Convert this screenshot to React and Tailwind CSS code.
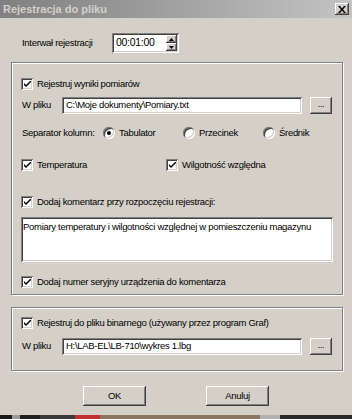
const FONT = { fontFamily: '"Liberation Sans", Arial, sans-serif' };

const RAISED =
  'shadow-[inset_-1px_-1px_#404040,inset_1px_1px_#ffffff,inset_-2px_-2px_#808080,inset_2px_2px_#d4d0c8]';
const SUNKEN =
  'shadow-[inset_1px_1px_#808080,inset_-1px_-1px_#ffffff,inset_2px_2px_#404040,inset_-2px_-2px_#d4d0c8]';

function CheckBox({ label, className = '' }) {
  return (
    <div className={`flex items-center h-[14px] ${className}`}>
      <div className={`w-[12px] h-[12px] bg-white flex items-center justify-center ${SUNKEN}`}>
        <svg width="7" height="7" viewBox="0 0 7 7">
          <path d="M0 2 L0 4 L2 6 L7 1 L7 -1 L2 4 Z" fill="#000" />
        </svg>
      </div>
      <span className="ml-[4px] text-[9.5px] text-black whitespace-nowrap">{label}</span>
    </div>
  );
}

function Radio({ label, checked, className = '' }) {
  return (
    <div className={`flex items-center h-[14px] ${className}`}>
      <div className="w-[12px] h-[12px] rounded-full bg-white flex items-center justify-center shadow-[inset_1px_1px_#808080,inset_-1px_-1px_#ffffff,inset_2px_2px_#404040,inset_-2px_-2px_#d4d0c8]">
        {checked && <div className="w-[4px] h-[4px] rounded-full bg-black" />}
      </div>
      <span className="ml-[4px] text-[9.5px] text-black whitespace-nowrap">{label}</span>
    </div>
  );
}

function FileRow({ value }) {
  return (
    <div className="flex items-center h-[17px]">
      <span className="w-[41px] pl-[1px] text-[9.5px] text-black">W pliku</span>
      <div className={`w-[240px] h-[17px] bg-white flex items-center pl-[4px] text-[9.5px] text-black ${SUNKEN}`}>
        {value}
      </div>
      <div className={`ml-[8px] w-[22px] h-[17px] bg-[#d4d0c8] flex items-center justify-center text-[9px] text-black pb-[2px] ${RAISED}`}>
        ...
      </div>
    </div>
  );
}

function Group({ className = '', children }) {
  return (
    <div
      className={`mx-[11px] w-[332px] border border-[#808080] shadow-[1px_1px_0_#ffffff,inset_1px_1px_0_#ffffff] pl-[9px] pr-[9px] ${className}`}
    >
      {children}
    </div>
  );
}

export default function App() {
  return (
    <div className="w-[352px] h-[419px] bg-[#d4d0c8] flex flex-col overflow-hidden tracking-[-0.3px]" style={FONT}>
      {/* pasek tytułu */}
      <div className="h-[18px] flex items-center justify-between bg-gradient-to-r from-[#808080] to-[#c4c4c4] pl-[3px] pr-[3px]">
        <span className="text-[11px] font-bold text-[#d4d0c8] tracking-[0px]">Rejestracja do pliku</span>
        <div className={`w-[14px] h-[12px] bg-[#d4d0c8] flex items-center justify-center ${RAISED}`}>
          <svg width="8" height="7" viewBox="0 0 8 7">
            <path d="M0 0 L2 0 L4 2.5 L6 0 L8 0 L5 3.5 L8 7 L6 7 L4 4.5 L2 7 L0 7 L3 3.5 Z" fill="#000" />
          </svg>
        </div>
      </div>

      {/* interwał */}
      <div className="flex items-center mt-[15px] h-[20px]">
        <span className="ml-[22px] w-[90px] text-[9.5px] text-black">Interwał rejestracji</span>
        <div className={`w-[67px] h-[20px] bg-white flex items-center pl-[4px] ${SUNKEN}`}>
          <span className="text-[10.5px] text-black flex-1">00:01:00</span>
          <div className="flex flex-col mr-[2px]">
            <div className={`w-[11px] h-[8px] bg-[#d4d0c8] flex items-center justify-center ${RAISED}`}>
              <svg width="5" height="3" viewBox="0 0 5 3"><path d="M2.5 0 L5 3 L0 3 Z" fill="#000" /></svg>
            </div>
            <div className={`w-[11px] h-[8px] bg-[#d4d0c8] flex items-center justify-center ${RAISED}`}>
              <svg width="5" height="3" viewBox="0 0 5 3"><path d="M0 0 L5 0 L2.5 3 Z" fill="#000" /></svg>
            </div>
          </div>
        </div>
      </div>

      {/* grupa 1 */}
      <Group className="mt-[9px] h-[233px]">
        <CheckBox label="Rejestruj wyniki pomiarów" className="mt-[14px]" />
        <div className="mt-[6px]">
          <FileRow value="C:\Moje dokumenty\Pomiary.txt" />
        </div>
        <div className="flex items-center mt-[12px] h-[14px]">
          <span className="w-[82px] pl-[1px] text-[9.5px] text-black">Separator kolumn:</span>
          <Radio label="Tabulator" checked className="w-[80px]" />
          <Radio label="Przecinek" className="w-[80px]" />
          <Radio label="Średnik" />
        </div>
        <div className="flex items-center mt-[18px]">
          <CheckBox label="Temperatura" className="w-[145px]" />
          <CheckBox label="Wilgotność względna" />
        </div>
        <CheckBox label="Dodaj komentarz przy rozpoczęciu rejestracji:" className="mt-[23px]" />
        <div className={`mt-[8px] w-[312px] h-[45px] bg-white pl-[2px] pt-[3px] text-[9.5px] text-black ${SUNKEN}`}>
          Pomiary temperatury i wilgotności względnej w pomieszczeniu magazynu
        </div>
        <CheckBox label="Dodaj numer seryjny urządzenia do komentarza" className="mt-[13px]" />
      </Group>

      {/* grupa 2 */}
      <Group className="mt-[12px] h-[64px]">
        <CheckBox label="Rejestruj do pliku binarnego (używany przez program Graf)" className="mt-[8px]" />
        <div className="mt-[8px]">
          <FileRow value="H:\LAB-EL\LB-710\wykres 1.lbg" />
        </div>
      </Group>

      {/* przyciski */}
      <div className="flex mt-[15px] h-[20px]">
        <div className={`ml-[83px] w-[63px] h-[20px] bg-[#d4d0c8] flex items-center justify-center text-[9.5px] text-black ${RAISED}`}>
          OK
        </div>
        <div className={`ml-[60px] w-[63px] h-[20px] bg-[#d4d0c8] flex items-center justify-center text-[9.5px] text-black ${RAISED}`}>
          Anuluj
        </div>
      </div>

      {/* pasek pulpitu */}
      <div className="mt-auto h-[4px] flex">
        <div className="w-[12px] bg-[#1a1a1a]" />
        <div className="w-[8px] bg-[#9a9a9a]" />
        <div className="w-[20px] bg-[#202020]" />
        <div className="w-[35px] bg-[#3a3a3a]" />
        <div className="w-[25px] bg-[#c03030]" />
        <div className="w-[160px] bg-[#8a7560]" />
        <div className="w-[20px] bg-[#b0b0b0]" />
        <div className="flex-1 bg-[#2a2a2a]" />
      </div>
    </div>
  );
}
